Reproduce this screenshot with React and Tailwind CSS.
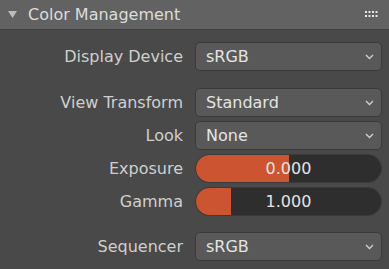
const font = { fontFamily: '"DejaVu Sans", sans-serif' }

function Chevron() {
  return (
    <svg width="9" height="6" viewBox="0 0 9 6" className="shrink-0">
      <path d="M1 1 L4.5 4.5 L8 1" fill="none" stroke="#cfcfcf" strokeWidth="1.4" />
    </svg>
  )
}

function Row({ label, children }) {
  return (
    <div className="flex items-center h-[29px]">
      <div className="w-[195px] shrink-0 pr-[12px] text-right text-[16px] text-[#cfcfcf]">{label}</div>
      <div className="w-[187px]">{children}</div>
    </div>
  )
}

function Select({ value }) {
  return (
    <div className="h-[29px] rounded-[5px] bg-[#595959] border border-[#3a3a3a] flex items-center justify-between pl-[10px] pr-[7px] text-[16px] text-[#e4e4e4]">
      <span>{value}</span>
      <Chevron />
    </div>
  )
}

function Slider({ value, pct }) {
  return (
    <div className="relative h-[29px] rounded-full bg-[#2e2e2e] border border-[#3a3a3a] overflow-hidden flex items-center justify-center text-[16px] text-[#e4e4e4]">
      <div className="absolute left-0 top-0 bottom-0 bg-[#cc5430]" style={{ width: pct + '%' }} />
      <span className="relative">{value}</span>
    </div>
  )
}

export default function App() {
  return (
    <div className="w-[389px] h-[269px] bg-[#494949] overflow-hidden" style={font}>
      <div className="h-[30px] bg-[#626262] border-b border-[#3f3f3f] flex items-center pl-[8px] pr-[11px]">
        <svg width="9" height="7" viewBox="0 0 9 7" className="mr-[11px]">
          <path d="M0 0 H9 L4.5 7 Z" fill="#bdbdbd" />
        </svg>
        <span className="text-[16px] text-[#dcdcdc] flex-1">Color Management</span>
        <svg width="13" height="8" viewBox="0 0 13 8">
          {[0, 1].map(r => [0, 1, 2, 3].map(c => (
            <rect key={r + '-' + c} x={c * 3.5} y={r * 4} width="2" height="2" fill="#e8e8e8" />
          )))}
        </svg>
      </div>
      <div className="flex flex-col pt-[12px]">
        <Row label="Display Device"><Select value="sRGB" /></Row>
        <div className="h-[17px]" />
        <div className="flex flex-col gap-[4px]">
          <Row label="View Transform"><Select value="Standard" /></Row>
          <Row label="Look"><Select value="None" /></Row>
          <Row label="Exposure"><Slider value="0.000" pct={50} /></Row>
          <Row label="Gamma"><Slider value="1.000" pct={19} /></Row>
        </div>
        <div className="h-[16px]" />
        <Row label="Sequencer"><Select value="sRGB" /></Row>
      </div>
    </div>
  )
}
